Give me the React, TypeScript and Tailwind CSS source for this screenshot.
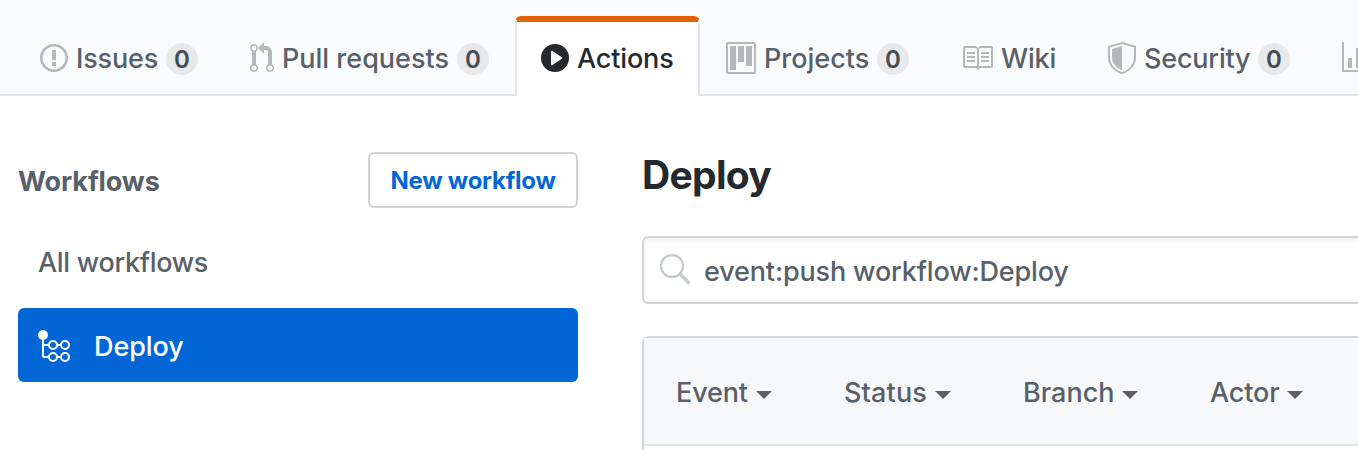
import type { ReactNode } from "react";

function Icon({ width, className = "", children }: { width: number; className?: string; children: ReactNode }) {
  return (
    <svg
      width={width * 2}
      height={32}
      viewBox={`0 0 ${width} 16`}
      fill="currentColor"
      fillRule="evenodd"
      className={`block shrink-0 ${className}`}
      aria-hidden="true"
    >
      {children}
    </svg>
  );
}

function Counter() {
  return (
    <span className="mt-0.5 flex size-8 shrink-0 items-center justify-center rounded-full bg-[#e8e9eb] pt-0.5 text-2xl leading-8 font-semibold text-[#444d56]">
      0
    </span>
  );
}

function Tab({ className, children }: { className: string; children: ReactNode }) {
  return (
    <a className={`flex h-20 shrink-0 items-center border-b-2 border-[#e1e4e8] pt-1.5 pl-[26px] text-[#586069] ${className}`}>
      {children}
    </a>
  );
}

const gray = "text-[#b5b7ba]";

function Nav() {
  return (
    <nav className="flex h-24 items-end overflow-hidden bg-[#fafbfc] text-[27px] leading-8 font-[450] whitespace-nowrap">
      <div className="h-20 w-3.5 shrink-0 border-b-2 border-[#e1e4e8]" />
      <Tab className="w-[210px]">
        <Icon width={14} className={gray}>
          <path d="M7 2.3c3.14 0 5.7 2.56 5.7 5.7s-2.56 5.7-5.7 5.7A5.71 5.71 0 0 1 1.3 8c0-3.14 2.56-5.7 5.7-5.7zM7 1C3.14 1 0 4.14 0 8s3.14 7 7 7 7-3.14 7-7-3.14-7-7-7zm1 3H6v5h2V4zm0 6H6v2h2v-2z" />
        </Icon>
        <span className="mt-0.5 ml-2 w-[90px] tracking-[-0.15px]">Issues</span>
        <Counter />
      </Tab>
      <Tab className="w-[291px]">
        <Icon width={12} className={gray}>
          <path d="M11 11.28V5c-.03-.78-.34-1.47-.94-2.06C9.46 2.35 8.78 2.03 8 2H7V0L4 3l3 3V4h1c.27.02.48.11.69.31.21.2.3.42.31.69v6.28A1.993 1.993 0 0 0 10 15a1.993 1.993 0 0 0 1-3.72zm-1 2.92c-.66 0-1.2-.55-1.2-1.2 0-.65.55-1.2 1.2-1.2.65 0 1.2.55 1.2 1.2 0 .65-.55 1.2-1.2 1.2zM4 3c0-1.11-.89-2-2-2a1.993 1.993 0 0 0-1 3.72v6.56A1.993 1.993 0 0 0 2 15a1.993 1.993 0 0 0 1-3.72V4.72c.59-.34 1-.98 1-1.72zm-.8 10c0 .66-.55 1.2-1.2 1.2-.65 0-1.2-.55-1.2-1.2 0-.65.55-1.2 1.2-1.2.65 0 1.2.55 1.2 1.2zM2 4.2C1.34 4.2.8 3.65.8 3c0-.65.55-1.2 1.2-1.2.65 0 1.2.55 1.2 1.2 0 .65-.55 1.2-1.2 1.2z" />
        </Icon>
        <span className="mt-0.5 ml-2 w-[175px]">Pull requests</span>
        <Counter />
      </Tab>
      <a className="flex h-20 w-[185px] shrink-0 items-center rounded-t-md border-x-2 border-t-6 border-x-[#e1e4e8] border-t-[#e36209] bg-white pb-0.5 pl-6 text-[#24292e]">
        <Icon width={14}>
          <path d="M14 8A7 7 0 1 1 0 8a7 7 0 0 1 14 0zm-8.223 3.482l4.599-3.066a.5.5 0 0 0 0-.832L5.777 4.518A.5.5 0 0 0 5 4.934v6.132a.5.5 0 0 0 .777.416z" />
        </Icon>
        <span className="mt-0.5 ml-2 tracking-[-0.15px]">Actions</span>
      </a>
      <Tab className="w-[235px]">
        <Icon width={15} className={gray}>
          <path d="M10 12h3V2h-3v10zm-4-2h3V2H6v8zm-4 4h3V2H2v12zm-1 1h13V1H1v14zM14 0H1a1 1 0 0 0-1 1v14a1 1 0 0 0 1 1h13a1 1 0 0 0 1-1V1a1 1 0 0 0-1-1z" />
        </Icon>
        <span className="mt-0.5 ml-2 w-[113px]">Projects</span>
        <Counter />
      </Tab>
      <Tab className="w-[147px]">
        <Icon width={16} className={gray}>
          <path d="M3 5h4v1H3V5zm0 3h4V7H3v1zm0 2h4V9H3v1zm11-5h-4v1h4V5zm0 2h-4v1h4V7zm0 2h-4v1h4V9zm2-6v9c0 .55-.45 1-1 1H9.5l-1 1-1-1H2c-.55 0-1-.45-1-1V3c0-.55.45-1 1-1h5.5l1 1 1-1H15c.55 0 1 .45 1 1zm-8 .5L7.5 3H2v9h6V3.5zm7-.5H9.5l-.5.5V12h6V3z" />
        </Icon>
        <span className="mt-0.5 ml-2 tracking-[-0.2px]">Wiki</span>
      </Tab>
      <Tab className="w-[234px]">
        <Icon width={14} className={gray}>
          <path d="M0 2l7-2 7 2v6.02C14 12.69 8.69 16 7 16c-1.69 0-7-3.31-7-7.98V2zm1 .75L7 1l6 1.75v5.268C13 12.104 8.449 15 7 15c-1.449 0-6-2.896-6-6.982V2.75zm1 .75L7 2v12c-1.207 0-5-2.482-5-5.985V3.5z" />
        </Icon>
        <span className="mt-0.5 ml-2 w-[114px] tracking-[-0.2px]">Security</span>
        <Counter />
      </Tab>
      <Tab className="w-[100px]">
        <Icon width={16} className={gray}>
          <path d="M16 14v1H0V0h1v14h15zM5 13H3V8h2v5zm4 0H7V3h2v10zm4 0h-2V6h2v7z" />
        </Icon>
      </Tab>
    </nav>
  );
}

function WorkflowIcon() {
  return (
    <svg width="32" height="32" viewBox="0 0 32 32" fill="none" stroke="currentColor" strokeWidth="2" className="mt-0.5 shrink-0" aria-hidden="true">
      <circle cx="5" cy="5" r="5" fill="currentColor" stroke="none" />
      <path d="M5 5v21q0 1 1 1h5M5 15h6M19 15h4M19 27h4" />
      <circle cx="15" cy="15" r="4" />
      <circle cx="27" cy="15" r="4" />
      <circle cx="15" cy="27" r="4" />
      <circle cx="27" cy="27" r="4" />
    </svg>
  );
}

function Sidebar() {
  return (
    <aside className="w-[560px] shrink-0 pt-14">
      <div className="flex h-14 items-center justify-between">
        <h2 className="pt-1 text-[27px] leading-8 font-[650] tracking-[-0.1px] text-[#586069]">Workflows</h2>
        <button className="h-14 w-[210px] rounded-md border-2 border-[#d2d3d4] pt-0.5 text-2xl leading-8 font-[650] tracking-[-0.25px] whitespace-nowrap text-[#0366d6]">
          New workflow
        </button>
      </div>
      <div className="mt-[18px] flex h-[74px] items-center pl-5 tracking-[-0.3px] text-[#586069]">All workflows</div>
      <div className="mt-2 flex h-[74px] items-center rounded-md bg-[#0366d6] pl-5 text-white">
        <WorkflowIcon />
        <span className="ml-6 pt-1 tracking-[-0.1px]">Deploy</span>
      </div>
    </aside>
  );
}

function Filter({ label, className }: { label: string; className: string }) {
  return (
    <div className={`flex items-center ${className}`}>
      <span>{label}</span>
      <svg width="16" height="8" viewBox="0 0 16 8" fill="currentColor" className="mt-1 shrink-0 ml-2" aria-hidden="true">
        <path d="M0 0h16L8 8z" />
      </svg>
    </div>
  );
}

export default function App() {
  return (
    <div className="h-[450px] w-[1358px] overflow-hidden bg-white font-['Inter',sans-serif]">
      <Nav />
      <div className="flex pl-[18px] text-[27px] leading-8 font-[450] whitespace-nowrap">
        <Sidebar />
        <main className="ml-16 w-[740px] shrink-0 pt-[55px]">
          <h1 className="h-12 text-[39px] leading-12 font-[650] tracking-[-0.7px] text-[#24292e]">Deploy</h1>
          <div className="mt-[37px] flex h-[68px] items-center rounded-md border-2 border-[#d1d5da] pl-4 text-[#586069] shadow-[inset_0_2px_4px_rgba(27,31,35,0.075)]">
            <svg width="32" height="32" viewBox="0 0 32 32" fill="none" stroke="#c6cbd1" className="shrink-0" aria-hidden="true">
              <circle cx="12" cy="12" r="11" strokeWidth="2.4" />
              <path d="M20 20l8.5 8.5" strokeWidth="3.4" strokeLinecap="round" />
            </svg>
            <span className="ml-3 pt-1 tracking-[-0.15px]">event:push workflow:Deploy</span>
          </div>
          <div className="mt-8 h-40 rounded-t-md border-2 border-[#d1d5da]">
            <div className="flex h-[108px] items-center border-b-2 border-[#e1e4e8] bg-[#f6f8fa] pt-1 pl-8 text-[#586069]">
              <Filter label="Event" className="w-[168px] tracking-[-0.15px]" />
              <Filter label="Status" className="w-[179px] tracking-[0.15px]" />
              <Filter label="Branch" className="w-[187px]" />
              <Filter label="Actor" className="w-[120px] tracking-[-0.15px]" />
            </div>
          </div>
        </main>
      </div>
    </div>
  );
}
